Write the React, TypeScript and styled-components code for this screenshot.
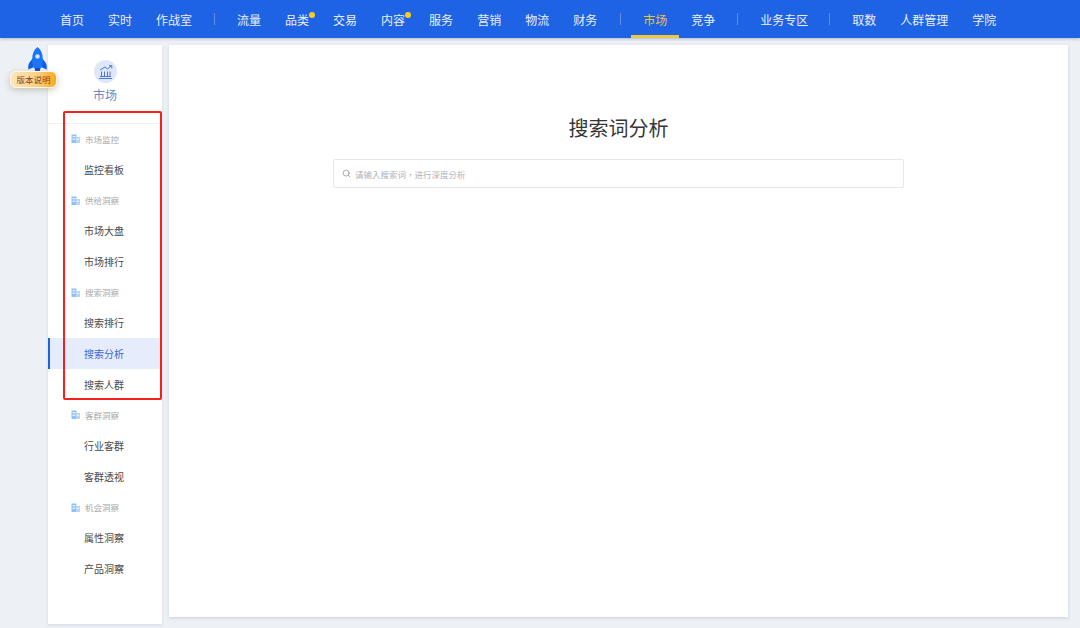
import React from "react";
import styled, { createGlobalStyle } from "styled-components";
import { Search } from "lucide-react";

const GlobalStyle = createGlobalStyle`
  html, body {
    margin: 0;
    padding: 0;
    height: 628px;
    overflow: hidden;
    background: #edf0f5;
    font-family: "Noto Sans CJK SC", "Liberation Sans", sans-serif;
  }
  * { box-sizing: border-box; }
`;

const Page = styled.div`
  position: relative;
  width: 1080px;
  height: 628px;
`;

const TopBar = styled.nav`
  display: flex;
  align-items: center;
  height: 38px;
  padding-left: 48px;
  background: #1f63e5;
  box-shadow: 0 1px 3px rgba(60, 80, 130, 0.35);
`;

const NavItem = styled.div<{ $active?: boolean }>`
  position: relative;
  display: flex;
  align-items: center;
  justify-content: center;
  height: 38px;
  padding: 0 12px;
  font-size: 12px;
  white-space: nowrap;
  color: ${(p) => (p.$active ? "#e8c13f" : "#e9effb")};
  border-bottom: ${(p) => (p.$active ? "3px solid #e9c83f" : "none")};
  padding-top: ${(p) => (p.$active ? "3px" : "0")};
`;

const Dot = styled.span`
  position: absolute;
  top: 12px;
  right: 6px;
  width: 6px;
  height: 6px;
  border-radius: 50%;
  background: #f6cf1e;
`;

const NavDivider = styled.span`
  width: 1px;
  height: 12px;
  margin: 0 10px;
  background: rgba(255, 255, 255, 0.28);

  &:nth-of-type(2) {
    margin-left: 11px;
  }
  &:last-of-type {
    margin-left: 9px;
  }
`;

const Badge = styled.div`
  position: absolute;
  left: 10px;
  top: 47px;
  width: 47px;
  display: flex;
  flex-direction: column;
  align-items: center;
`;

const Rocket = styled.svg`
  display: block;
  margin: 0 0 -1px 8px;
`;

const BadgeLabel = styled.div`
  width: 47px;
  height: 17px;
  border-radius: 6px;
  border: 1px solid #fff6e6;
  background: linear-gradient(90deg, #fce6bd 0%, #fbd288 55%, #fda81c 100%);
  box-shadow: 0 2px 6px rgba(120, 105, 70, 0.35);
  color: #7e3f1c;
  font-size: 8.5px;
  line-height: 14px;
  text-align: center;
  white-space: nowrap;
`;

const Content = styled.div`
  display: flex;
  align-items: flex-start;
  gap: 7px;
  padding: 7px 0 0 48px;
`;

const Sidebar = styled.aside`
  position: relative;
  width: 114px;
  height: 579px;
  background: #fff;
  box-shadow: 0 1px 3px rgba(120, 135, 165, 0.2);
`;

const SideHead = styled.div`
  display: flex;
  flex-direction: column;
  align-items: center;
  height: 79px;
  padding-top: 15px;
  border-bottom: 1px solid #eef0f3;
`;

const HeadIcon = styled.div`
  display: flex;
  align-items: center;
  justify-content: center;
  width: 23px;
  height: 23px;
  border-radius: 50%;
  background: #dfe8fb;
`;

const HeadLabel = styled.div`
  margin-top: 3px;
  font-size: 12px;
  line-height: 18px;
  color: #6d87c4;
`;

const Menu = styled.div`
  display: flex;
  flex-direction: column;
  margin-top: -0.6px;
`;

const GroupTitle = styled.div`
  display: flex;
  align-items: center;
  gap: 5px;
  height: 30.7px;
  padding-left: 23px;
  font-size: 8.5px;
  color: #a6a9ae;
`;

const MenuItem = styled.div<{ $active?: boolean }>`
  display: flex;
  align-items: center;
  height: 30.7px;
  padding-left: ${(p) => (p.$active ? "34px" : "36px")};
  font-size: 10px;
  color: ${(p) => (p.$active ? "#3a66d8" : "#4a4a4a")};
  background: ${(p) => (p.$active ? "#e5edfc" : "transparent")};
  border-left: ${(p) => (p.$active ? "2px solid #1f63e5" : "none")};
`;

const Highlight = styled.div`
  position: absolute;
  left: 15px;
  top: 66px;
  width: 99px;
  height: 289px;
  border: 2px solid #f5201c;
  border-radius: 2px;
  pointer-events: none;
`;

const Main = styled.main`
  display: flex;
  flex-direction: column;
  align-items: center;
  width: 899px;
  height: 572px;
  padding-top: 69px;
  background: #fff;
  box-shadow: 0 1px 3px rgba(120, 135, 165, 0.3);
`;

const Title = styled.h1`
  margin: 0;
  font-size: 20px;
  font-weight: 400;
  line-height: 28px;
  color: #363636;
`;

const SearchBox = styled.div`
  display: flex;
  align-items: center;
  gap: 4px;
  width: 571px;
  height: 29px;
  margin-top: 17px;
  padding-left: 8px;
  border: 1px solid #e6e8eb;
  border-radius: 2px;
  font-family: "Noto Sans CJK TC", "Liberation Sans", sans-serif;
  font-size: 8.5px;
  color: #b0b3b8;
`;

const RocketIcon = () => (
  <Rocket width="19" height="25" viewBox="0 0 19 25">
    <path d="M5 11L1.500 15.500C0.500 17 0 19 0.300 22.500L5 20.500Z" fill="#0f5fe6" />
    <path d="M14 11L17.500 15.500C18.500 17 19 19 18.700 22.500L14 20.500Z" fill="#0f5fe6" />
    <path d="M9.500 0C6 2.500 4.200 7 4.200 12C4.200 15 4.500 18 5.500 21L13.500 21C14.500 18 14.800 15 14.800 12C14.800 7 13 2.500 9.500 0Z" fill="#1d75f3" />
    <path d="M6.500 21H12.500L11.500 25H7.500Z" fill="#0b4fd0" />
    <circle cx="9.500" cy="9.500" r="2.300" fill="#cfe4ff" />
  </Rocket>
);

const MarketIcon = () => (
  <svg width="15" height="14" viewBox="0 0 15 14" fill="none" stroke="#4c77d6" strokeWidth="1">
    <path d="M1 13.500H14M2 11.500H13M3.500 11V6.500M6.500 11V6.500M9.500 11V6.500M12 11V6.500" />
    <path d="M2 5L7 2L9.500 4L13.500 0.800M11 0.700H13.800V3.400" />
  </svg>
);

const GroupIcon = () => (
  <svg width="9" height="9" viewBox="0 0 9 9">
    <path d="M0.500 0.500H5.500V9H0.500Z" fill="#8fc0f7" />
    <path d="M5.500 3H9V9H5.500Z" fill="#b4d6fa" />
    <path d="M1.500 2.200H4.500V3.200H1.500ZM1.500 4.800H4.500V5.800H1.500ZM6.300 4.800H8.200V5.800H6.300Z" fill="#fff" />
  </svg>
);

const navGroups: string[][] = [
  ["首页", "实时", "作战室"],
  ["流量", "品类", "交易", "内容", "服务", "营销", "物流", "财务"],
  ["市场", "竞争"],
  ["业务专区"],
  ["取数", "人群管理", "学院"],
];
const dotted = ["品类", "内容"];

const menu = [
  { title: "市场监控", items: ["监控看板"] },
  { title: "供给洞察", items: ["市场大盘", "市场排行"] },
  { title: "搜索洞察", items: ["搜索排行", "搜索分析", "搜索人群"] },
  { title: "客群洞察", items: ["行业客群", "客群透视"] },
  { title: "机会洞察", items: ["属性洞察", "产品洞察"] },
];

export default function App(): JSX.Element {
  return (
    <Page>
      <GlobalStyle />
      <TopBar>
        {navGroups.map((group, i) => (
          <React.Fragment key={i}>
            {i > 0 && <NavDivider />}
            {group.map((name) => (
              <NavItem key={name} $active={name === "市场"}>
                {name}
                {dotted.includes(name) && <Dot />}
              </NavItem>
            ))}
          </React.Fragment>
        ))}
      </TopBar>
      <Content>
        <Sidebar>
          <SideHead>
            <HeadIcon>
              <MarketIcon />
            </HeadIcon>
            <HeadLabel>市场</HeadLabel>
          </SideHead>
          <Menu>
            {menu.map((group) => (
              <React.Fragment key={group.title}>
                <GroupTitle>
                  <GroupIcon />
                  {group.title}
                </GroupTitle>
                {group.items.map((item) => (
                  <MenuItem key={item} $active={item === "搜索分析"}>
                    {item}
                  </MenuItem>
                ))}
              </React.Fragment>
            ))}
          </Menu>
          <Highlight />
        </Sidebar>
        <Main>
          <Title>搜索词分析</Title>
          <SearchBox>
            <Search size={9} color="#8c9096" strokeWidth={2} />
            请输入搜索词，进行深度分析
          </SearchBox>
        </Main>
      </Content>
      <Badge>
        <RocketIcon />
        <BadgeLabel>版本说明</BadgeLabel>
      </Badge>
    </Page>
  );
}
